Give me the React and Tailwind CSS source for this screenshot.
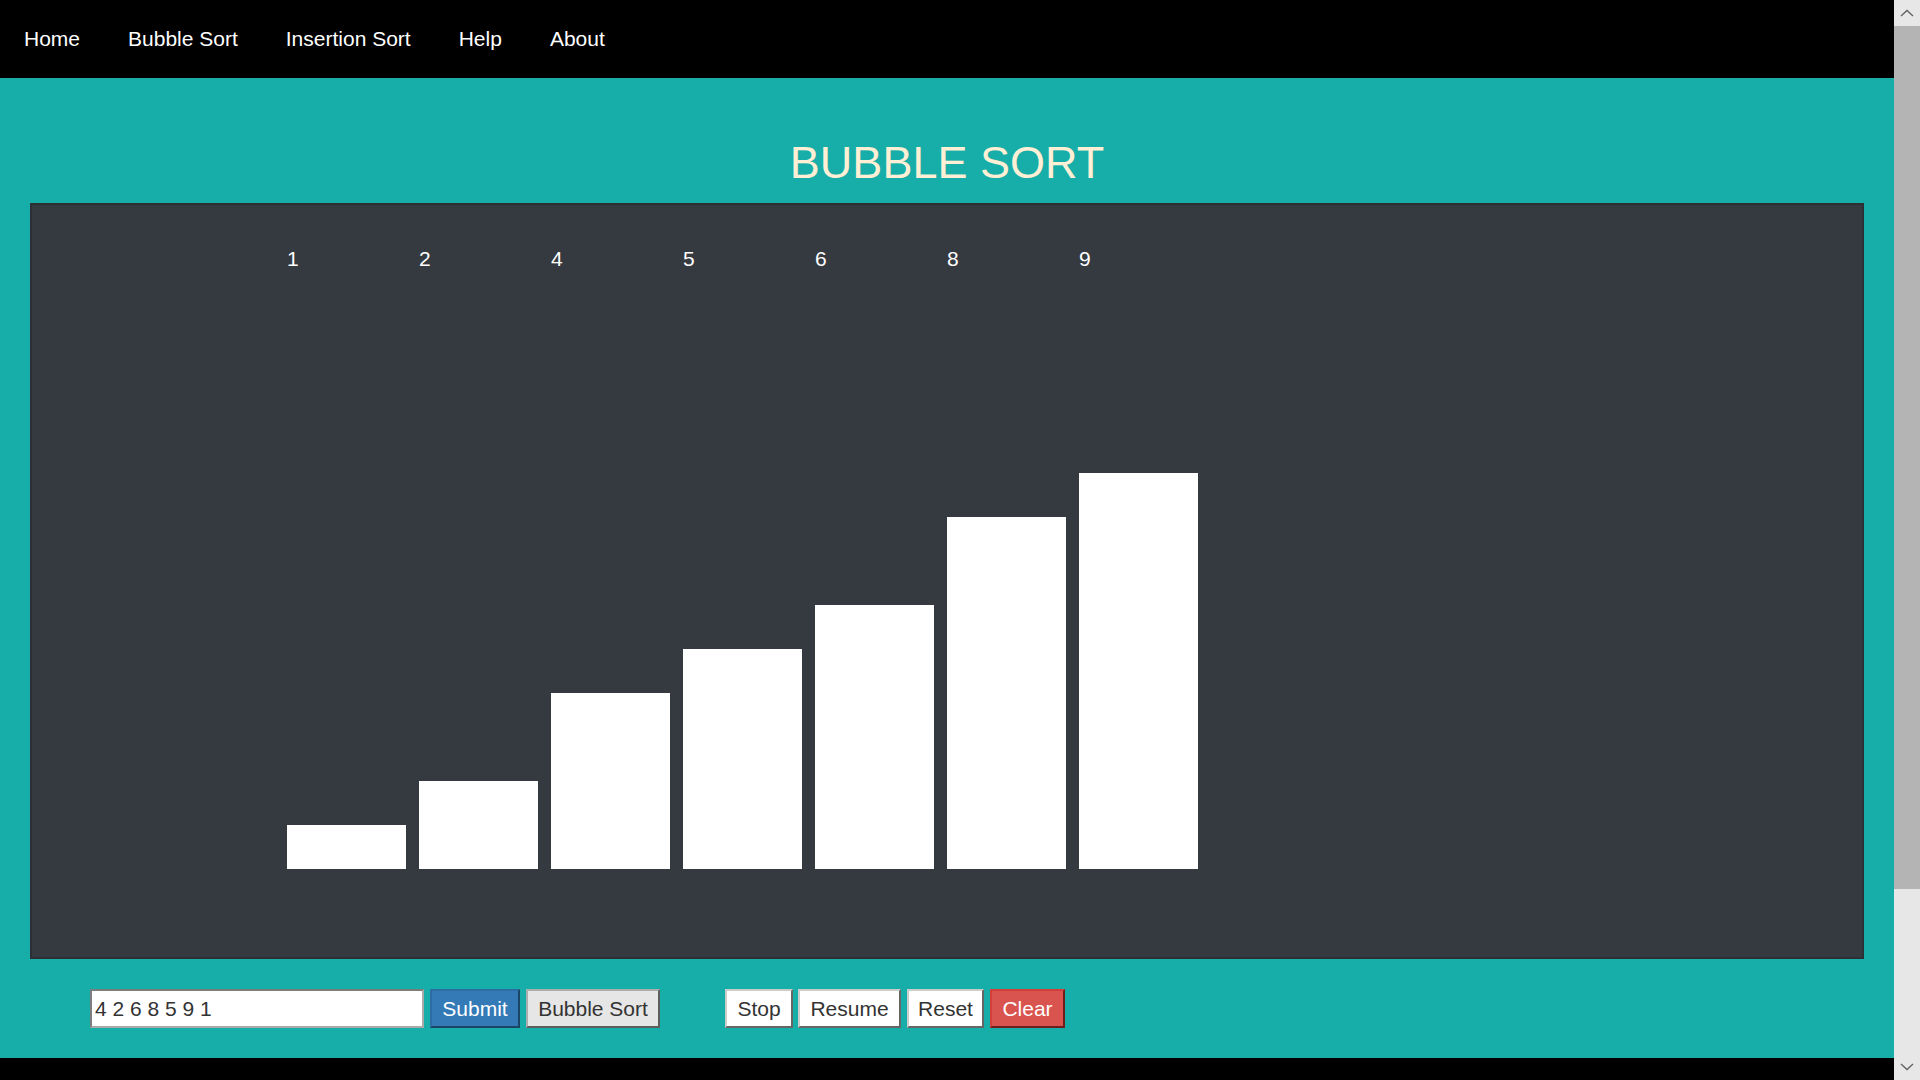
const values = [1, 2, 4, 5, 6, 8, 9];

const navLinks = ['Home', 'Bubble Sort', 'Insertion Sort', 'Help', 'About'];

function Chevron({ up }) {
  return (
    <svg width="14" height="8" viewBox="0 0 14 8" fill="none">
      <path
        d={up ? 'M1 7 L7 1.5 L13 7' : 'M1 1 L7 6.5 L13 1'}
        stroke="#606060"
        strokeWidth="1.3"
      />
    </svg>
  );
}

export default function App() {
  return (
    <div
      className="flex h-screen overflow-hidden"
      style={{ fontFamily: '"Liberation Sans", Arial, sans-serif' }}
    >
      <div className="flex-1 flex flex-col overflow-hidden">
        <nav className="h-[78px] shrink-0 bg-black flex items-center">
          {navLinks.map((name) => (
            <a key={name} className="px-6 text-[21px] text-white cursor-pointer">
              {name}
            </a>
          ))}
        </nav>

        <div className="bg-[#17ada8] shrink-0 pt-[60px] pb-[30px]">
          <h1 className="text-center text-[45px] leading-[50px] text-[#ffefd5] font-normal">
            BUBBLE SORT
          </h1>

          <div className="mx-[30px] mt-[15px] h-[756px] bg-[#353a41] border-2 border-[#2c3034] pt-[42px] pl-[255px] flex gap-[13px]">
            {values.map((v) => (
              <div key={v} className="w-[119px] h-[622px] flex flex-col">
                <div className="text-[21px] leading-[24px] text-white">{v}</div>
                <div className="flex-1" />
                <div className="bg-white" style={{ height: v * 44 }} />
              </div>
            ))}
          </div>

          <div className="flex items-center mt-[30px] pl-[90px] gap-[5px] text-[21px]">
            <input
              defaultValue="4 2 6 8 5 9 1"
              className="w-[334px] h-[39px] bg-white border-2 border-t-[#7d7d7d] border-l-[#7d7d7d] border-b-[#a9a9a9] border-r-[#a9a9a9] pl-[3px] text-[#333] outline-none"
            />
            <button className="h-[39px] w-[90px] ml-[1px] border-2 bg-[#337ab7] text-white border-t-[#2e6da4] border-l-[#2e6da4] border-b-[#1b4567] border-r-[#1b4567]">
              Submit
            </button>
            <button className="h-[39px] w-[134px] ml-[1px] border-2 bg-[#e6e6e6] text-[#333] border-t-[#adadad] border-l-[#adadad] border-b-[#5e5e5e] border-r-[#5e5e5e]">
              Bubble Sort
            </button>
            <button className="h-[39px] w-[68px] ml-[60px] border-2 bg-white text-[#333] border-t-[#cccccc] border-l-[#cccccc] border-b-[#666666] border-r-[#666666]">
              Stop
            </button>
            <button className="h-[39px] w-[103px] border-2 bg-white text-[#333] border-t-[#cccccc] border-l-[#cccccc] border-b-[#666666] border-r-[#666666]">
              Resume
            </button>
            <button className="h-[39px] w-[77px] ml-[1px] border-2 bg-white text-[#333] border-t-[#cccccc] border-l-[#cccccc] border-b-[#666666] border-r-[#666666]">
              Reset
            </button>
            <button className="h-[39px] w-[75px] ml-[1px] border-2 bg-[#d9534f] text-white border-t-[#d43f3a] border-l-[#d43f3a] border-b-[#6e1f1c] border-r-[#6e1f1c]">
              Clear
            </button>
          </div>
        </div>

        <footer className="h-[60px] shrink-0 bg-black" />
      </div>

      <div className="w-[26px] shrink-0 bg-[#e7e7e7] flex flex-col">
        <div className="h-[26px] flex items-center justify-center">
          <Chevron up />
        </div>
        <div className="h-[863px] bg-[#b4b4b4]" />
        <div className="flex-1" />
        <div className="h-[26px] flex items-center justify-center">
          <Chevron />
        </div>
      </div>
    </div>
  );
}
